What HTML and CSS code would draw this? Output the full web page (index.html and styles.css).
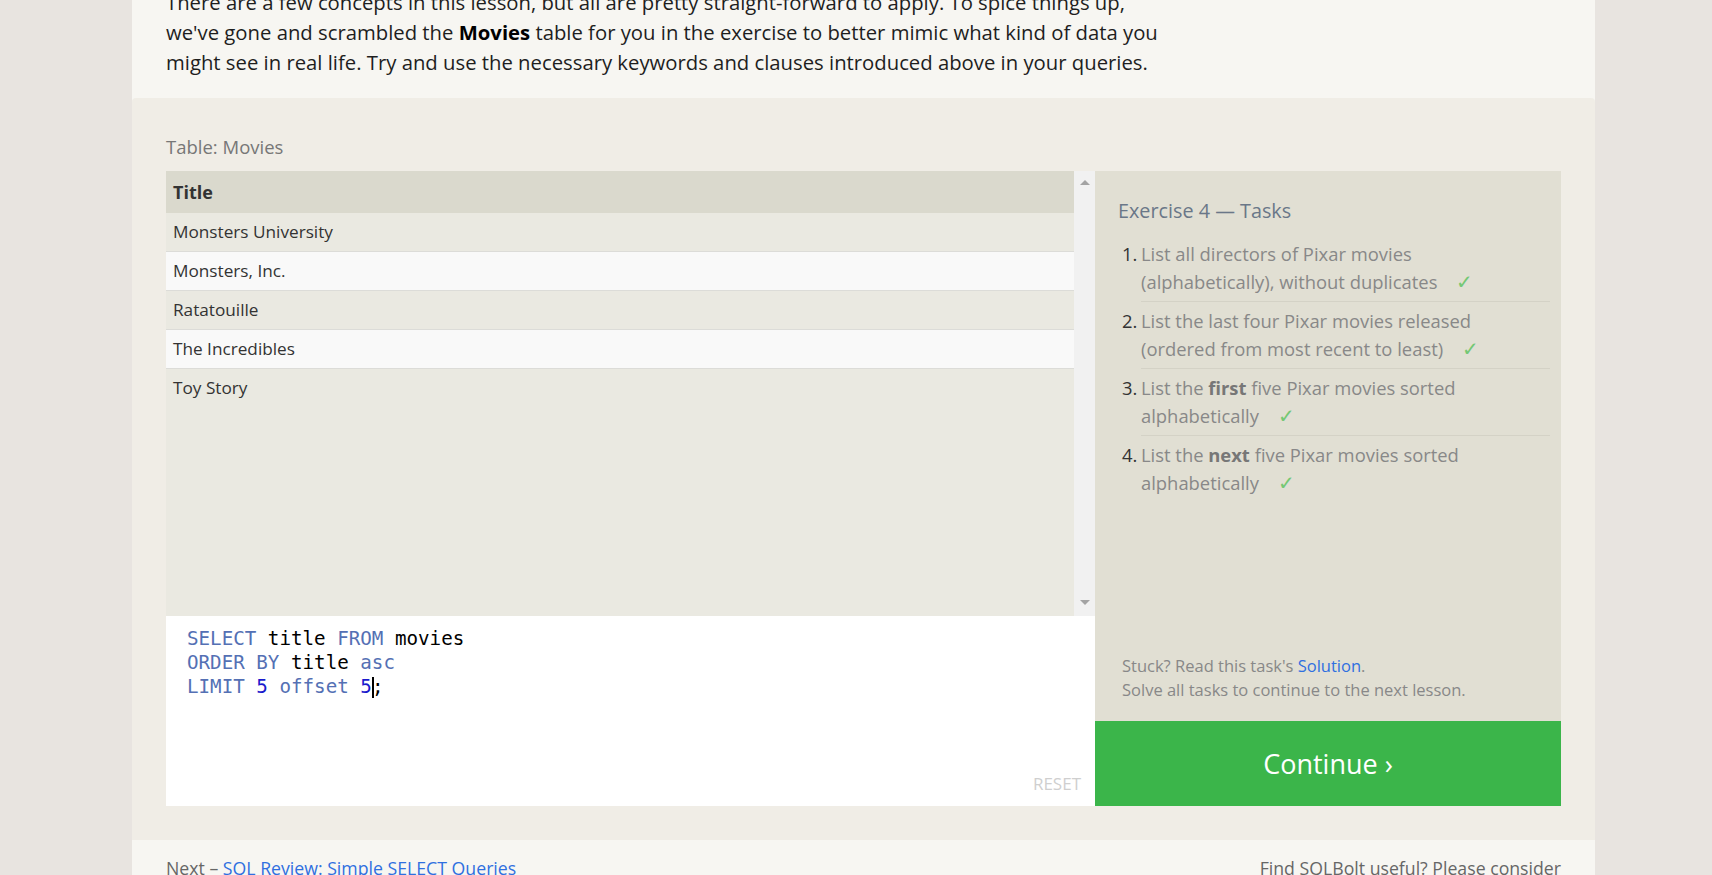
FILE: index.html
```html
<!DOCTYPE html>
<html lang="en">
<head>
<meta charset="utf-8">
<title>SQLBolt - Lesson 4</title>
<link rel="stylesheet" href="styles.css">
</head>
<body>
<div class="page">
  <section class="intro">
    <p>There are a few concepts in this lesson, but all are pretty straight-forward to apply. To spice things up,<br>we've gone and scrambled the <strong>Movies</strong> table for you in the exercise to better mimic what kind of data you<br>might see in real life. Try and use the necessary keywords and clauses introduced above in your queries.</p>
  </section>
  <section class="exercise">
    <div class="table-label">Table: Movies</div>
    <div class="workspace">
      <div class="left-col">
        <div class="table-wrap">
          <div class="table-body">
            <div class="row head">Title</div>
            <div class="row odd">Monsters University</div>
            <div class="row even">Monsters, Inc.</div>
            <div class="row odd">Ratatouille</div>
            <div class="row even">The Incredibles</div>
            <div class="row odd last">Toy Story</div>
          </div>
          <div class="scrollbar">
            <span class="arrow up"></span>
            <span class="arrow down"></span>
          </div>
        </div>
        <div class="editor">
<pre class="code"><span class="kw">SELECT</span> title <span class="kw">FROM</span> movies
<span class="kw">ORDER BY</span> title <span class="kw">asc</span>
<span class="kw">LIMIT</span> <span class="num">5</span> <span class="kw">offset</span> <span class="num">5</span><span class="cursor"></span>;</pre>
          <div class="reset">RESET</div>
        </div>
      </div>
      <div class="right-col">
        <div class="tasks">
          <h3 class="tasks-title">Exercise 4 — Tasks</h3>
          <ol class="task-list">
            <li class="task"><span class="task-num">1.</span><div class="task-text">List all directors of Pixar movies<br>(alphabetically), without duplicates <span class="check">✓</span></div></li>
            <li class="task"><span class="task-num">2.</span><div class="task-text">List the last four Pixar movies released<br>(ordered from most recent to least) <span class="check">✓</span></div></li>
            <li class="task"><span class="task-num">3.</span><div class="task-text">List the <b>first</b> five Pixar movies sorted<br>alphabetically <span class="check">✓</span></div></li>
            <li class="task"><span class="task-num">4.</span><div class="task-text last">List the <b>next</b> five Pixar movies sorted<br>alphabetically <span class="check">✓</span></div></li>
          </ol>
          <div class="stuck">
            <div>Stuck? Read this task's <a class="link" href="#">Solution</a>.</div>
            <div>Solve all tasks to continue to the next lesson.</div>
          </div>
        </div>
        <a class="continue" href="#">Continue ›</a>
      </div>
    </div>
  </section>
  <footer class="footer">
    <div>Next – <a class="link" href="#">SQL Review: Simple SELECT Queries</a></div>
    <div>Find SQLBolt useful? Please consider</div>
  </footer>
</div>
</body>
</html>
```

FILE: styles.css
```css
html, body {
  margin: 0;
  padding: 0;
}
body {
  background: #e8e4e0;
  font-family: "Open Sans", "Noto Sans", sans-serif;
  color: #222;
  overflow: hidden;
}
.page {
  width: 1463px;
  margin-left: 132px;
  margin-top: -13px;
  background: #f7f6f2;
}
.intro {
  padding: 0 34px 21px;
}
.intro p {
  margin: 0;
  font-size: 20.3px;
  line-height: 30px;
  color: #1e1e1e;
  white-space: nowrap;
}
.intro strong {
  font-weight: 700;
  color: #000;
}
.exercise {
  background: #f0ede6;
  border-radius: 4px 4px 0 0;
  padding: 37px 34px 34px;
}
.table-label {
  font-size: 18.5px;
  line-height: 24px;
  color: #777;
  margin-bottom: 12px;
}
.workspace {
  display: flex;
}
.left-col {
  width: 929px;
  display: flex;
  flex-direction: column;
}
.right-col {
  width: 466px;
  display: flex;
  flex-direction: column;
}
.table-wrap {
  height: 445px;
  display: flex;
  background: #eae9e1;
}
.table-body {
  flex: 1;
  background: #eae9e1;
}
.row {
  height: 38px;
  line-height: 38px;
  padding-left: 7px;
  font-size: 17.2px;
  color: #333;
  border-bottom: 1px solid #dcdcd8;
}
.row.head {
  height: 42px;
  line-height: 42px;
  background: #dad9cd;
  font-weight: 700;
  font-size: 18px;
  color: #333;
  border-bottom: 0;
}
.row.odd { background: #eae9e1; }
.row.even { background: #f9f9f9; }
.row.last { border-bottom: 0; }
.scrollbar {
  width: 21px;
  background: #f1f1f1;
  display: flex;
  flex-direction: column;
  justify-content: space-between;
  align-items: center;
  padding: 9px 0 11px;
  box-sizing: border-box;
}
.arrow {
  width: 0;
  height: 0;
  border-left: 5px solid transparent;
  border-right: 5px solid transparent;
}
.arrow.up { border-bottom: 5px solid #a3a3a3; }
.arrow.down { border-top: 5px solid #a3a3a3; }
.editor {
  height: 190px;
  box-sizing: border-box;
  background: #fff;
  padding: 11px 14px 12px 21px;
  display: flex;
  flex-direction: column;
}
.code {
  margin: 0;
  font-family: "DejaVu Sans Mono", "Liberation Mono", monospace;
  font-size: 19.2px;
  line-height: 24px;
  color: #000;
}
.kw { color: #5470b4; }
.num { color: #1a1acc; }
.cursor {
  display: inline-block;
  width: 0;
  height: 21px;
  border-left: 2px solid #000;
  vertical-align: -5px;
  margin-right: -2px;
}
.reset {
  margin-top: auto;
  align-self: flex-end;
  font-size: 17px;
  line-height: 20px;
  color: #cfcfcf;
}
.tasks {
  flex: 1;
  background: #e1dfd3;
  padding: 26px 11px 19px 23px;
  display: flex;
  flex-direction: column;
}
.tasks-title {
  margin: 0 0 15px;
  font-size: 19.8px;
  line-height: 28px;
  font-weight: 400;
  color: #6a7788;
}
.task-list {
  list-style: none;
  margin: 0;
  padding: 0 0 0 4px;
}
.task {
  display: flex;
  font-size: 18.4px;
  line-height: 28px;
}
.task-num {
  width: 19px;
  flex: none;
  color: #333;
}
.task:not(:first-child) .task-num {
  padding-top: 5px;
}
.task-text {
  flex: 1;
  color: #888;
  padding: 0 0 5px;
  border-bottom: 1px solid #d4d2c6;
}
.task:not(:first-child) .task-text {
  padding-top: 5px;
}
.task-text.last {
  border-bottom: 0;
}
.task-text b {
  color: #777;
  font-weight: 700;
}
.check {
  color: #74c874;
  margin-left: 14px;
  font-family: "DejaVu Sans", sans-serif;
  font-size: 20px;
  font-weight: 300;
}
.stuck {
  margin-top: auto;
  padding-left: 4px;
  font-size: 16.5px;
  line-height: 24px;
  color: #888;
}
.link {
  color: #2f6fe0;
  text-decoration: none;
}
.continue {
  height: 85px;
  background: #3bb54a;
  color: #fff;
  font-size: 27px;
  text-decoration: none;
  display: flex;
  align-items: center;
  justify-content: center;
}
.footer {
  background: #f7f6f2;
  display: flex;
  justify-content: space-between;
  padding: 16px 34px 20px;
  font-size: 17.7px;
  line-height: 24px;
  color: #666;
}
```
